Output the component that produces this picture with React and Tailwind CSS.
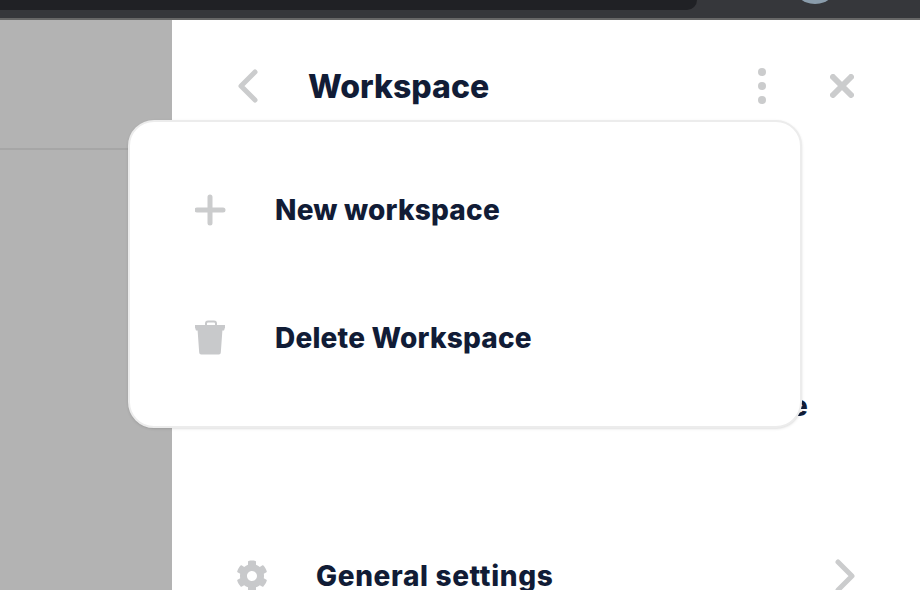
import { FaCog } from "react-icons/fa";

const font = { fontFamily: "Inter, 'Liberation Sans', sans-serif" };

function TrashIcon() {
  return (
    <svg width="32" height="36" viewBox="0 0 32 36" fill="#c8c9cb">
      <path d="M11 5V3.500A2 2 0 0 1 13 1.500h6a2 2 0 0 1 2 2V5" fill="none" stroke="#c8c9cb" strokeWidth="2" />
      <path d="M0 5h30v2.500l-1 3H1L0 7.500z" />
      <path d="M2.500 9h25l-1.700 23.500a2 2 0 0 1-2 2H6.200a2 2 0 0 1-2-2z" />
    </svg>
  );
}

function PlusIcon() {
  return (
    <svg width="32" height="32" viewBox="0 0 32 32" fill="none" stroke="#cbcccd" strokeWidth="5" strokeLinecap="round">
      <path d="M15 3v26M2 16h26" />
    </svg>
  );
}

function MenuRow({ icon, label }) {
  return (
    <div className="flex h-16 items-center pl-[65px]">
      <div className="flex w-8 justify-center">{icon}</div>
      <span className="ml-12 text-[28px] font-extrabold tracking-[0.2px] text-[#111c36]">{label}</span>
    </div>
  );
}

export default function App() {
  return (
    <div className="relative flex h-[590px] w-[920px] flex-col overflow-hidden bg-white" style={font}>
      {/* browser bar */}
      <div className="flex h-5 shrink-0 border-b-2 border-[#676767] bg-[#36373b]">
        <div className="h-2.5 w-[697px] rounded-br-2xl bg-[#202125]" />
        <div className="-mt-11 ml-[94px] h-12 w-12 rounded-full bg-[#8a9cab]" />
      </div>

      <div className="flex min-h-0 flex-1">
        {/* dimmed page behind */}
        <div className="w-[172px] shrink-0 bg-[#b3b3b3] pt-[128px]">
          <div className="h-0.5 bg-[#a6a6a6]" />
        </div>

        {/* side panel */}
        <div className="flex-1 bg-white">
          <div className="flex h-[132px] items-center">
            <svg className="ml-[64px]" width="24" height="36" viewBox="0 0 24 36" fill="none" stroke="#cbcccd" strokeWidth="5" strokeLinecap="round" strokeLinejoin="round">
              <path d="M19 4 5 18l14 14" />
            </svg>
            <h1 className="ml-[48px] w-[446px] pt-0.5 text-[32px] font-extrabold text-[#111c36]">Workspace</h1>
            <div className="flex w-[16px] flex-col items-center gap-1.5">
              <div className="h-2 w-2 rounded-full bg-[#cbcccd]" />
              <div className="h-2 w-2 rounded-full bg-[#cbcccd]" />
              <div className="h-2 w-2 rounded-full bg-[#cbcccd]" />
            </div>
            <svg className="ml-[60px]" width="24" height="24" viewBox="0 0 24 24" fill="none" stroke="#cbcccd" strokeWidth="6" strokeLinecap="round">
              <path d="M3 3l18 18M21 3 3 21" />
            </svg>
          </div>

          {/* row hidden behind the menu, only its last letter shows */}
          <div className="mt-[234px] flex h-10 items-center pl-[619px]">
            <span className="text-[28px] font-extrabold text-[#111c36]">e</span>
          </div>

          <div className="mt-[130px] flex h-10 items-center pl-[64px]">
            <FaCog size={32} color="#c8c9cb" />
            <span className="ml-12 text-[28px] font-extrabold tracking-[0.65px] text-[#111c36]">General settings</span>
            <svg className="mr-[63px] ml-auto" width="24" height="36" viewBox="0 0 24 36" fill="none" stroke="#cbcccd" strokeWidth="5" strokeLinecap="round" strokeLinejoin="round">
              <path d="M5 4l14 14L5 32" />
            </svg>
          </div>
        </div>
      </div>

      {/* menu popup */}
      <div className="absolute top-[120px] left-[128px] flex h-[308px] w-[674px] flex-col justify-center gap-16 rounded-[26px] border-2 border-[#ececec] bg-white shadow-sm">
        <MenuRow icon={<PlusIcon />} label="New workspace" />
        <MenuRow icon={<TrashIcon />} label="Delete Workspace" />
      </div>
    </div>
  );
}
